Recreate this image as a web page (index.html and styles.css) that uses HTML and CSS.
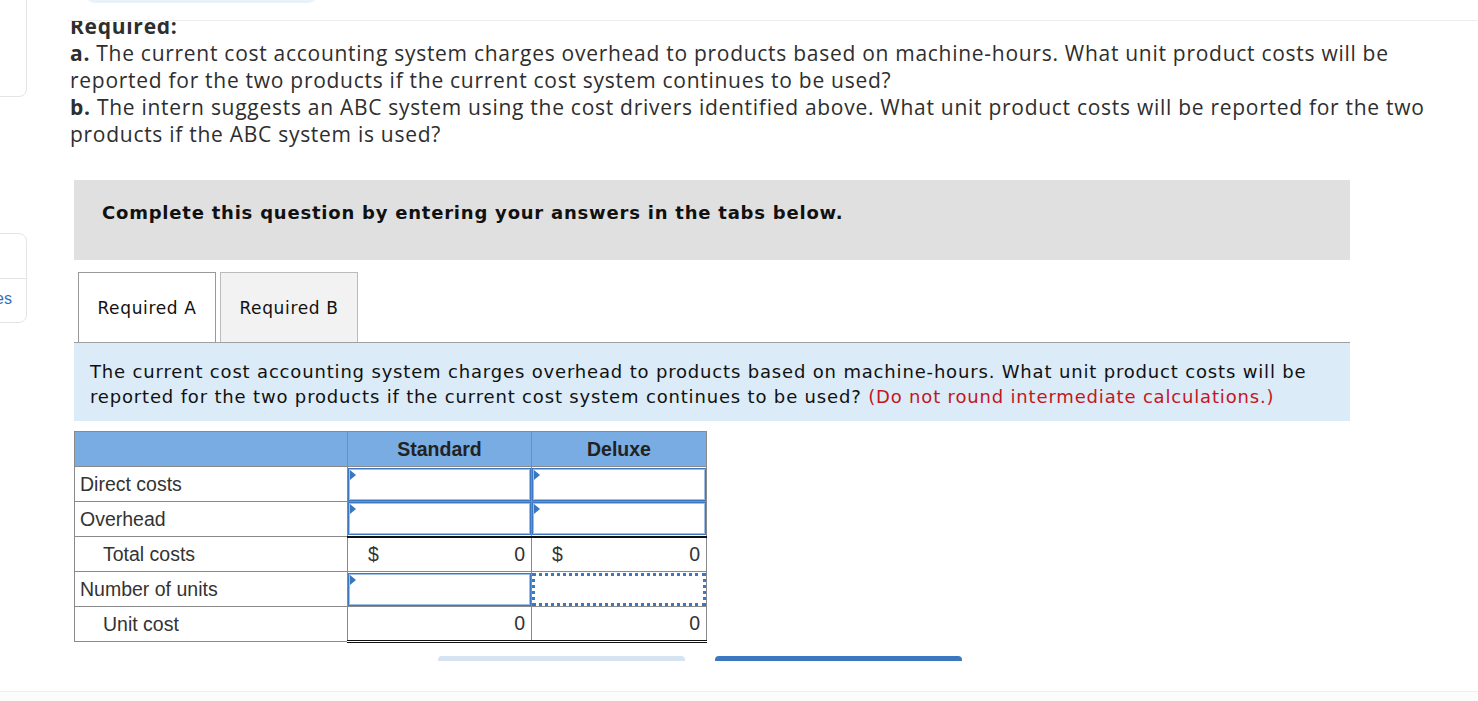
FILE: index.html
```html
<!DOCTYPE html>
<html>
<head>
<meta charset="utf-8">
<link rel="stylesheet" href="styles.css">
</head>
<body>
<div class="layout">
  <aside class="sidebar">
    <div class="card card-top"></div>
    <div class="card card-notes">
      <div class="card-row"></div>
      <div class="card-row card-link">Notes</div>
    </div>
  </aside>
  <main class="main">
    <div class="topbar"><div class="pill"></div></div>
    <div class="pane">
      <div class="pane-content">
        <div class="question">
          <p class="q-title">Required:</p>
          <p><b>a.</b> The current cost accounting system charges overhead to products based on machine-hours. What unit product costs will be reported for the two products if the current cost system continues to be used?</p>
          <p><b>b.</b> The intern suggests an ABC system using the cost drivers identified above. What unit product costs will be reported for the two products if the ABC system is used?</p>
        </div>
        <div class="notice">Complete this question by entering your answers in the tabs below.</div>
        <div class="tabs">
          <div class="tab tab-active">Required A</div>
          <div class="tab">Required B</div>
        </div>
        <div class="instruction">The current cost accounting system charges overhead to products based on machine-hours. What unit product costs will be reported for the two products if the current cost system continues to be used? <span class="red">(Do not round intermediate calculations.)</span></div>
        <table class="grid">
          <colgroup><col class="c1"><col class="c2"><col class="c3"></colgroup>
          <thead>
            <tr><th></th><th>Standard</th><th>Deluxe</th></tr>
          </thead>
          <tbody>
            <tr><td class="label">Direct costs</td><td class="in"><div class="box"><span class="flag"></span></div></td><td class="in"><div class="box"><span class="flag"></span></div></td></tr>
            <tr><td class="label">Overhead</td><td class="in"><div class="box"><span class="flag"></span></div></td><td class="in"><div class="box"><span class="flag"></span></div></td></tr>
            <tr class="total"><td class="label indent">Total costs</td><td class="val"><div class="money"><span>$</span><span>0</span></div></td><td class="val"><div class="money"><span>$</span><span>0</span></div></td></tr>
            <tr class="units"><td class="label">Number of units</td><td class="in"><div class="box"><span class="flag"></span></div></td><td class="in"><div class="box dotted"></div></td></tr>
            <tr class="unit"><td class="label indent">Unit cost</td><td class="val"><div class="money end"><span>0</span></div></td><td class="val"><div class="money end"><span>0</span></div></td></tr>
          </tbody>
        </table>
        <div class="buttons">
          <div class="btn btn-light"></div>
          <div class="btn btn-blue"></div>
        </div>
      </div>
    </div>
    <div class="footer-space"></div>
  </main>
</div>
<div class="footer"></div>
</body>
</html>
```
FILE: styles.css
```css
* { box-sizing: border-box; }
html, body { margin: 0; padding: 0; background: #fff; }
body { width: 1478px; height: 701px; overflow: hidden; }
.layout { display: flex; height: 692px; border-bottom: 1px solid #eeeeee; }
.sidebar { width: 26px; flex: none; display: flex; flex-direction: column; }
.card { border: 1px solid #e4e4e4; background: #fff; margin-left: -40px; width: 67px; }
.card-top { height: 107px; margin-top: -10px; border-radius: 0 0 8px 0; }
.card-notes { margin-top: 136px; height: 90px; border-radius: 0 8px 8px 0; display: flex; flex-direction: column; }
.card-row { height: 45px; }
.card-row + .card-row { border-top: 1px solid #e4e4e4; }
.card-link { font-family: "Liberation Sans", Arial, sans-serif; font-size: 16px; color: #2f6fc0; text-align: right; padding-right: 14px; line-height: 40px; }
.main { flex: 1; margin-left: 42px; display: flex; flex-direction: column; }
.topbar { height: 20px; flex: none; }
.pill { margin-left: 17px; margin-top: -20px; width: 233px; height: 23px; background: #e9f1f9; border-radius: 0 0 10px 10px; }
.pane { height: 641px; flex: none; border-top: 1px solid #eeeeee; overflow: hidden; }
.pane-content { margin-top: -8px; }
.question { font-family: "Open Sans", "Lato", sans-serif; font-size: 21px; letter-spacing: 0.72px; line-height: 27px; color: #2e2e2e; padding-left: 2px; width: 1372px; }
.question p { margin: 0; }
.q-title { font-weight: bold; }
.question b { font-weight: bold; }
.notice { margin: 32px 0 0 6px; width: 1276px; height: 80px; background: #e0e0e0; padding: 22px 28px 0; font-family: "DejaVu Sans", Verdana, sans-serif; font-weight: bold; font-size: 18px; letter-spacing: 0.78px; color: #111; }
.tabs { margin: 12px 0 0 6px; width: 1276px; display: flex; gap: 4px; padding-left: 4px; border-bottom: 1px solid #a0a0a0; }
.tab { width: 138px; height: 70px; border: 1px solid #bbbbbb; border-bottom: none; background: #f2f2f2; font-family: "DejaVu Sans", Verdana, sans-serif; font-size: 17px; letter-spacing: 0.65px; color: #111; display: flex; align-items: center; justify-content: center; }
.tab-active { background: #fff; border-color: #999; }
.instruction { margin-left: 6px; width: 1276px; height: 78px; background: #dbebf8; padding: 16px 16px 0; font-family: "DejaVu Sans", Verdana, sans-serif; font-size: 18px; letter-spacing: 0.83px; line-height: 25px; color: #111; }
.red { color: #c4161c; }
.grid { margin: 10px 0 0 6px; border-collapse: collapse; table-layout: fixed; width: 632px; font-family: "Liberation Sans", Arial, sans-serif; font-size: 19.5px; color: #333; }
.c1 { width: 273px; } .c2 { width: 184px; } .c3 { width: 175px; }
.grid th, .grid td { border: 1px solid #8a8a8a; height: 35px; padding: 0; }
.grid th { background: #78ace3; font-weight: bold; color: #222; text-align: center; }
.label { padding-left: 5px !important; }
.indent { padding-left: 28px !important; }
.in { position: relative; }
.box { position: relative; height: 33px; border: 1px solid #3d79c2; box-shadow: inset 0 0 0 1px #9fc0e6; background: #fff; }
.flag { position: absolute; left: 1px; top: 1px; width: 0; height: 0; border-top: 5px solid transparent; border-bottom: 5px solid transparent; border-left: 6px solid #3a77c1; }
.box.dotted { border: 3px dotted #3b78c0; box-shadow: none; }
.total .val { border-top: 2px solid #111; }
.unit .val { border-top: 1px solid #555; border-bottom: 3px double #111; }
.money { display: flex; justify-content: space-between; padding: 0 6px 0 20px; }
.money.end { justify-content: flex-end; }
.buttons { display: flex; gap: 30px; margin: 13px 0 0 370px; }
.btn { width: 247px; height: 30px; border-radius: 4px 4px 0 0; }
.btn-light { background: #d6e3f1; }
.btn-blue { background: #3b78bf; }
.footer-space { flex: 1; }
.footer { height: 9px; background: #fcfcfc; }
```
